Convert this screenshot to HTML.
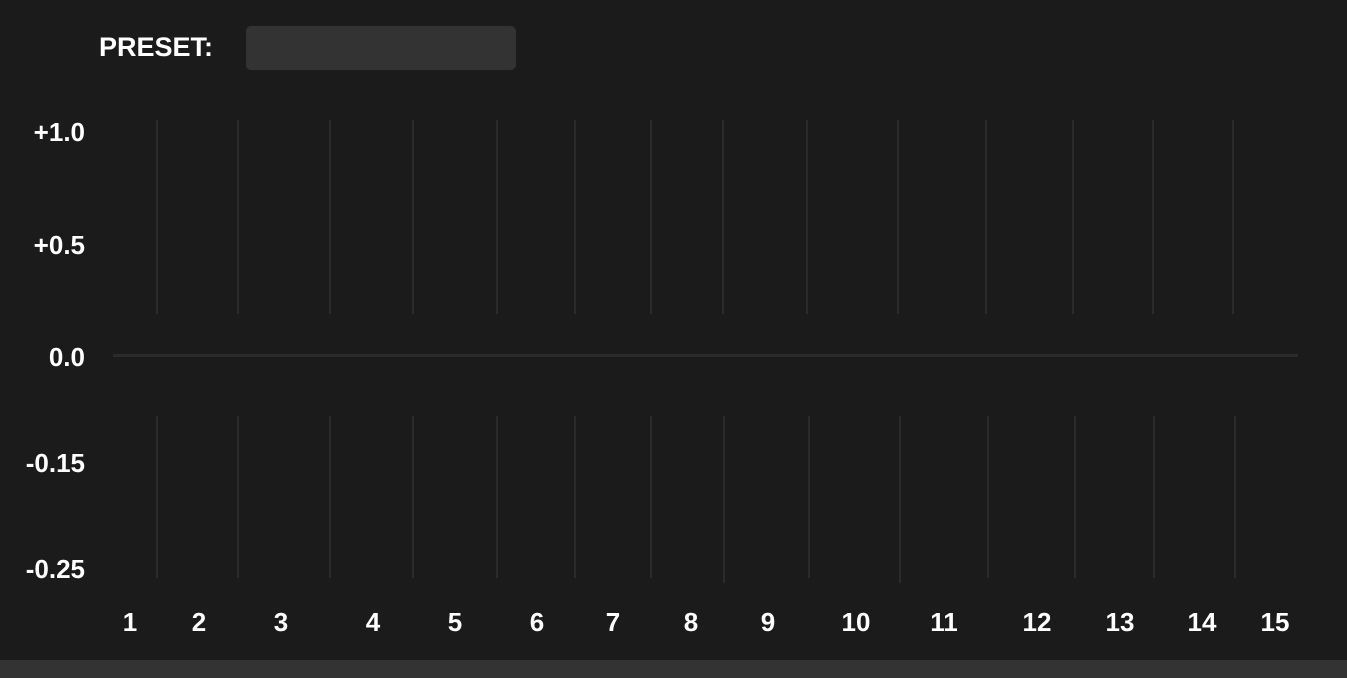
<!DOCTYPE html>
<html><head><style>
html,body{margin:0;padding:0;width:1347px;height:678px;background:#1b1b1b;overflow:hidden;font-family:"Liberation Sans",sans-serif;font-weight:bold;color:#fff}
.t{position:absolute;font-size:27px;line-height:27px;white-space:nowrap}
.y{position:absolute;right:1262px;font-size:26px;line-height:26px;text-align:right}
.n{position:absolute;font-size:26px;line-height:26px;transform:translateX(-50%);top:609px}
.v{position:absolute;width:2px;background:#2b2b2b}
.a{top:120px;height:194px}
.b{top:416px;height:162px}
</style></head><body>
<div class="t" style="left:99px;top:34px">PRESET:</div>
<div style="position:absolute;left:246px;top:26px;width:270px;height:44px;background:#333;border-radius:5px"></div>
<div class="y" style="top:119px">+1.0</div>
<div class="y" style="top:232px">+0.5</div>
<div class="y" style="top:344px">0.0</div>
<div class="y" style="top:450px">-0.15</div>
<div class="y" style="top:556px">-0.25</div>
<div style="position:absolute;left:113px;top:354px;width:1185px;height:3px;background:#2b2b2b"></div>

<div class="v a" style="left:156px"></div>
<div class="v a" style="left:237px"></div>
<div class="v a" style="left:329px"></div>
<div class="v a" style="left:412px"></div>
<div class="v a" style="left:496px"></div>
<div class="v a" style="left:574px"></div>
<div class="v a" style="left:650px"></div>
<div class="v a" style="left:722px"></div>
<div class="v a" style="left:806px"></div>
<div class="v a" style="left:897px"></div>
<div class="v a" style="left:985px"></div>
<div class="v a" style="left:1072px"></div>
<div class="v a" style="left:1152px"></div>
<div class="v a" style="left:1232px"></div>

<div class="v b" style="left:156px"></div>
<div class="v b" style="left:237px"></div>
<div class="v b" style="left:329px"></div>
<div class="v b" style="left:412px"></div>
<div class="v b" style="left:496px"></div>
<div class="v b" style="left:574px"></div>
<div class="v b" style="left:650px"></div>
<div class="v b" style="left:723px;height:167px"></div>
<div class="v b" style="left:808px"></div>
<div class="v b" style="left:899px;height:167px"></div>
<div class="v b" style="left:987px"></div>
<div class="v b" style="left:1074px"></div>
<div class="v b" style="left:1153px"></div>
<div class="v b" style="left:1234px"></div>

<div class="n" style="left:130px">1</div>
<div class="n" style="left:199px">2</div>
<div class="n" style="left:281px">3</div>
<div class="n" style="left:373px">4</div>
<div class="n" style="left:455px">5</div>
<div class="n" style="left:537px">6</div>
<div class="n" style="left:613px">7</div>
<div class="n" style="left:691px">8</div>
<div class="n" style="left:768px">9</div>
<div class="n" style="left:856px">10</div>
<div class="n" style="left:944px">11</div>
<div class="n" style="left:1037px">12</div>
<div class="n" style="left:1120px">13</div>
<div class="n" style="left:1202px">14</div>
<div class="n" style="left:1275px">15</div>

<div style="position:absolute;left:0;top:660px;width:1347px;height:18px;background:#333"></div>
</body></html>
